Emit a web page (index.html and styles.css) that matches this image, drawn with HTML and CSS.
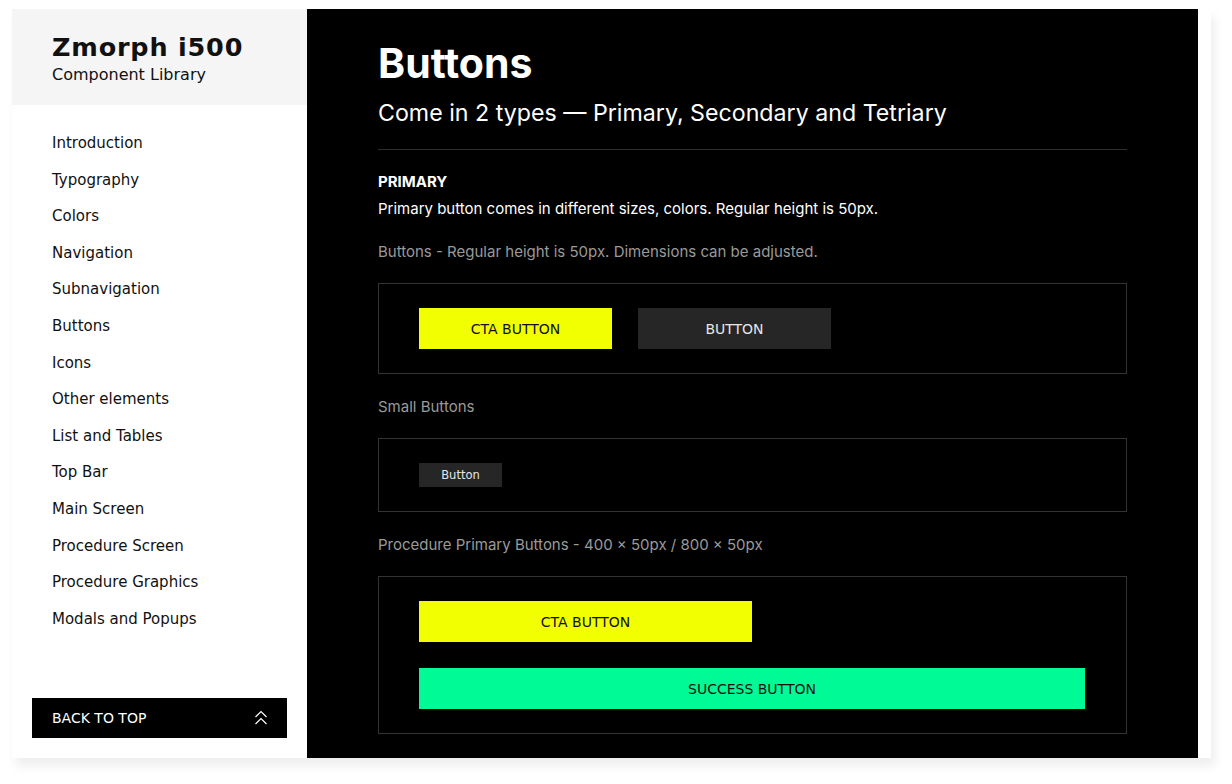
FILE: index.html
```html
<!DOCTYPE html>
<html>

<head>
    <title>Zmorph i500 - Component Library</title>
    <meta name="viewport" content="width=device-width, initial-scale=1.0">
    <link rel="stylesheet" href="styles.css">
</head>

<body>
    <div class="frame">
        <aside class="sidebar">
            <div class="brand">
                <h1>Zmorph i500</h1>
                <p>Component Library</p>
            </div>
            <nav class="menu">
                <a href="#">Introduction</a>
                <a href="#">Typography</a>
                <a href="#">Colors</a>
                <a href="#">Navigation</a>
                <a href="#">Subnavigation</a>
                <a href="#">Buttons</a>
                <a href="#">Icons</a>
                <a href="#">Other elements</a>
                <a href="#">List and Tables</a>
                <a href="#">Top Bar</a>
                <a href="#">Main Screen</a>
                <a href="#">Procedure Screen</a>
                <a href="#">Procedure Graphics</a>
                <a href="#">Modals and Popups</a>
            </nav>
            <a href="#" class="back-top">
                <span>BACK TO TOP</span>
                <svg width="14" height="18" viewBox="0 0 14 18" fill="none" stroke="#fff" stroke-width="1.2">
                    <path d="M1.5 8 L7 2.5 L12.5 8" />
                    <path d="M1.5 15 L7 9.5 L12.5 15" />
                </svg>
            </a>
        </aside>

        <main class="content">
            <h2 class="page-title">Buttons</h2>
            <p class="page-sub">Come in 2 types — Primary, Secondary and Tetriary</p>
            <hr>

            <h3 class="section-title">PRIMARY</h3>
            <p class="section-desc">Primary button comes in different sizes, colors. Regular height is 50px.</p>

            <p class="caption">Buttons - Regular height is 50px. Dimensions can be adjusted.</p>
            <div class="sample row">
                <button class="btn btn-cta">CTA BUTTON</button>
                <button class="btn btn-dark">BUTTON</button>
            </div>

            <p class="caption">Small Buttons</p>
            <div class="sample row">
                <button class="btn btn-small">Button</button>
            </div>

            <p class="caption">Procedure Primary Buttons - 400 × 50px / 800 × 50px</p>
            <div class="sample stack">
                <button class="btn btn-cta btn-wide">CTA BUTTON</button>
                <button class="btn btn-success btn-full">SUCCESS BUTTON</button>
            </div>
        </main>
    </div>
</body>

</html>
```

FILE: styles.css
```css
* {
    box-sizing: border-box;
    margin: 0;
    padding: 0;
}

body {
    background: #fff;
    font-family: "DejaVu Sans", sans-serif;
    width: 1232px;
    height: 784px;
    overflow: hidden;
}

.frame {
    display: flex;
    width: 1199px;
    height: 749px;
    margin: 9px 0 0 12px;
    background: #fff;
    padding-right: 13px;
    box-shadow: 4px 8px 10px rgba(0, 0, 0, 0.07);
}

/* sidebar */
.sidebar {
    width: 295px;
    display: flex;
    flex-direction: column;
    background: #fff;
}

.brand {
    background: #f5f5f5;
    height: 96px;
    padding: 23px 0 0 40px;
    color: #111;
}

.brand h1 {
    font-size: 25.5px;
    font-weight: bold;
    letter-spacing: 0.8px;
    line-height: 30px;
}

.brand p {
    font-size: 16px;
    line-height: 22px;
    margin-top: 2px;
}

.menu {
    display: flex;
    flex-direction: column;
    padding: 20px 0 0 40px;
}

.menu a {
    color: #111;
    text-decoration: none;
    font-size: 15px;
    line-height: 36.6px;
}

.back-top {
    margin: auto 20px 20px;
    height: 40px;
    background: #000;
    color: #fff;
    text-decoration: none;
    display: flex;
    align-items: center;
    justify-content: space-between;
    padding: 0 19px 0 20px;
    font-size: 14px;
}

/* main area */
.content {
    flex: 1;
    background: #000;
    color: #fff;
    padding: 29px 71px 0;
    font-family: Inter, "Liberation Sans", sans-serif;
}

.page-title {
    font-size: 41px;
    font-weight: 700;
    line-height: 50px;
}

.page-sub {
    font-size: 23.2px;
    line-height: 30px;
    margin-top: 10px;
}

hr {
    border: none;
    border-top: 1px solid #2e2e2e;
    margin-top: 21px;
}

.section-title {
    font-size: 15px;
    font-weight: 700;
    line-height: 20px;
    margin-top: 22px;
}

.section-desc {
    font-size: 15px;
    line-height: 20px;
    margin-top: 7px;
}

.caption {
    color: #9a9a9a;
    font-size: 15px;
    line-height: 20px;
    margin: 23px 0 21px;
}

.sample {
    border: 1px solid #333;
    padding: 24px 40px;
}

.row {
    display: flex;
    gap: 26px;
}

.stack {
    display: flex;
    flex-direction: column;
    gap: 26px;
}

/* buttons */
.btn {
    border: none;
    font-family: "DejaVu Sans", sans-serif;
    font-size: 14px;
    height: 41px;
    width: 193px;
    cursor: pointer;
}

.btn-cta {
    background: #f2ff00;
    color: #111;
}

.btn-dark {
    background: #262626;
    color: #e6e6e6;
}

.btn-small {
    background: #262626;
    color: #e6e6e6;
    width: 83px;
    height: 24px;
    font-size: 11.5px;
}

.btn-success {
    background: #00fa96;
    color: #111;
}

.btn-wide {
    width: 333px;
}

.btn-full {
    width: 666px;
}
```
